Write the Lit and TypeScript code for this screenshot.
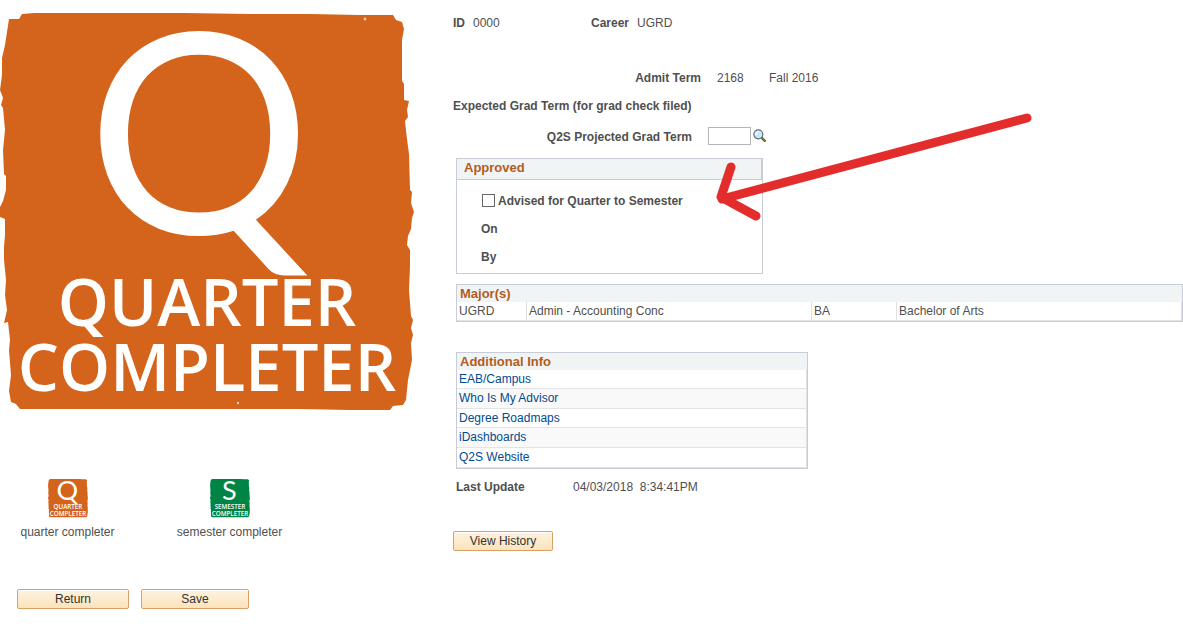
import { LitElement, html, css, svg } from "lit";
import { customElement, property } from "lit/decorators.js";

// Rough-edged stamp shared by the large badge and both thumbnails.
const STAMP =
  "M9 19 L19 19 L22 14 L34 13 L184 13 L250 14 L310 14 L360 15 L393 15 L396 20 L402 22 L404 29 L402 40 L402 81 L404 84 L404 100 L409 101 L407 110 L408 117 L405 121 L407 139 L409 154 L410 190 L412 192 L411 203 L414 212 L412 218 L411 229 L408 236 L407 245 L410 250 L410 267 L409 290 L411 316 L413 320 L411 328 L413 335 L411 343 L412 360 L408 380 L406 400 L403 405 L393 406 L390 410 L350 410 L300 409 L86 409 L20 409 L16 404 L11 402 L9 391 L11 375 L9 350 L10 340 L8 322 L4 323 L7 310 L5 295 L6 280 L4 260 L4 247 L5 235 L5 219 L0 217 L0 207 L3 201 L6 190 L6 176 L4 174 L3 150 L5 130 L3 108 L1 105 L3 98 L0 90 L2 75 L2 58 L5 45 Z";

@customElement("completer-badge")
export class CompleterBadge extends LitElement {
  @property() letter = "Q";
  @property() word = "QUARTER";
  @property() tone = "quarter";

  static styles = css`
    :host {
      display: block;
    }
    .art {
      display: block;
      width: 100%;
      height: auto;
      overflow: visible;
    }
    .quarter {
      fill: #d4641c;
    }
    .semester {
      fill: #008445;
    }
    .letter,
    .word {
      fill: #fff;
      text-anchor: middle;
    }
    .letter {
      font-family: Lato, "Open Sans", sans-serif;
      font-size: 280px;
      font-weight: 400;
    }
    .word {
      font-family: "Open Sans", "Noto Sans", sans-serif;
      font-size: 65px;
      font-weight: 600;
    }
    .speck {
      fill: #f3cdb4;
    }
  `;

  render() {
    return html`
      <svg class="art" viewBox="0 13 414 398" role="img" aria-label="${this.word} COMPLETER">
        ${svg`
          <path class=${this.tone} d=${STAMP}></path>
          <circle class="speck" cx="365" cy="19" r="1.4"></circle>
          <circle class="speck" cx="238" cy="403" r="1.2"></circle>
          <text class="letter" x="199" y="234">${this.letter}</text>
          <text class="word" x="207" y="326">${this.word}</text>
          <text class="word" x="207" y="391">COMPLETER</text>
        `}
      </svg>
    `;
  }
}

@customElement("app-root")
export class AppRoot extends LitElement {
  static styles = css`
    :host {
      display: block;
      position: relative;
      background: #fff;
      color: #4f4f4f;
      font-family: "Liberation Sans", Arial, sans-serif;
      font-size: 12px;
      line-height: 14px;
    }
    * {
      box-sizing: border-box;
    }
    .page {
      display: grid;
      grid-template-columns: 453px minmax(0, 1fr);
      align-items: start;
    }
    .side {
      padding-top: 13px;
    }
    .hero {
      width: 414px;
    }
    .choices {
      display: flex;
      gap: 55px;
      margin-top: 68px;
      padding-left: 14px;
    }
    .choice {
      display: flex;
      flex-direction: column;
      align-items: center;
      gap: 8px;
      width: 107px;
      margin: 0;
      white-space: nowrap;
    }
    .thumb {
      width: 40px;
    }
    .actions {
      display: flex;
      gap: 12px;
      margin-top: 50px;
      padding-left: 17px;
    }
    .button {
      height: 20px;
      padding: 0;
      border: 1px solid #d9a066;
      border-radius: 2px;
      background: linear-gradient(#fdf3e0, #fbe3bb);
      box-shadow: inset 0 1px 0 #fff;
      color: #333;
      font: inherit;
      line-height: 18px;
    }
    .return {
      width: 112px;
    }
    .save {
      width: 108px;
    }
    .history {
      width: 100px;
      margin-top: 37px;
    }
    .main {
      padding-top: 16px;
    }
    .line {
      display: flex;
      align-items: baseline;
    }
    .label {
      font-weight: 700;
    }
    .gap {
      margin-left: 8px;
    }
    .id {
      width: 138px;
    }
    .admit {
      margin-top: 41px;
      gap: 16px;
    }
    .admit-label {
      width: 248px;
      text-align: right;
    }
    .code {
      width: 36px;
    }
    .expected {
      margin-top: 14px;
    }
    .projected {
      align-items: center;
      margin-top: 14px;
    }
    .projected-label {
      width: 239px;
      margin-right: 16px;
      padding-top: 2px;
      text-align: right;
    }
    .term {
      width: 43px;
      height: 18px;
      padding: 0 2px;
      border: 1px solid #b5b5b5;
      border-radius: 0;
      font: inherit;
    }
    .lookup {
      width: 14px;
      height: 14px;
      margin-left: 2px;
      padding: 0;
      border: 0;
      background: none;
    }
    .glass {
      display: block;
    }
    .panel {
      margin-left: 3px;
      border: 1px solid #c8ccd6;
    }
    .title {
      margin: 0;
      padding: 0 3px;
      background: #f0f4f5;
      color: #b25d1d;
      font-size: 13px;
      font-weight: 700;
      line-height: 17px;
      text-align: left;
    }
    .approved {
      width: 307px;
      margin-top: 13px;
    }
    .approved-title {
      padding: 0 7px 3px;
      border-bottom: 1px solid #c8ccd6;
      border-right: 1px solid #c8ccd6;
    }
    .fields {
      display: flex;
      flex-direction: column;
      gap: 14px;
      padding: 14px 24px 9px;
    }
    .check {
      display: flex;
      align-items: flex-start;
      gap: 3px;
    }
    .box {
      appearance: none;
      width: 13px;
      height: 13px;
      margin: 0 0 0 1px;
      border: 1px solid #666;
      background: #fff;
    }
    .box:checked {
      background: #666;
    }
    .grid {
      border-spacing: 0;
      border-collapse: separate;
      table-layout: fixed;
    }
    .grid th {
      padding: 0 3px;
    }
    .grid td {
      height: 19px;
      padding: 0 2px 1px;
      border-right: 1px solid #dfe0e2;
      border-bottom: 1px solid #e2e4e6;
      vertical-align: middle;
    }
    .majors {
      width: calc(100% - 3px);
      margin-top: 10px;
    }
    .c-career {
      width: 70px;
    }
    .c-degree {
      width: 85px;
    }
    .info {
      width: 352px;
      margin-top: 30px;
    }
    .info tr:nth-child(even) td {
      height: 20px;
      background: #f9f9f9;
    }
    .info tbody tr:last-child td {
      height: 20px;
    }
    .link {
      color: #004b91;
      text-decoration: none;
    }
    .updated {
      margin-top: 11px;
      padding-left: 3px;
    }
    .updated-label {
      width: 117px;
    }
    .time {
      white-space: pre;
    }
    .arrow {
      position: absolute;
      left: 714px;
      top: 112px;
      pointer-events: none;
    }
  `;

  private links = [
    "EAB/Campus",
    "Who Is My Advisor",
    "Degree Roadmaps",
    "iDashboards",
    "Q2S Website",
  ];

  render() {
    return html`
      <div class="page">
        <div class="side">
          <completer-badge class="hero"></completer-badge>
          <div class="choices">
            <figure class="choice">
              <completer-badge class="thumb"></completer-badge>
              <figcaption>quarter completer</figcaption>
            </figure>
            <figure class="choice">
              <completer-badge class="thumb" letter="S" word="SEMESTER" tone="semester"></completer-badge>
              <figcaption>semester completer</figcaption>
            </figure>
          </div>
          <div class="actions">
            <button class="button return" type="button">Return</button>
            <button class="button save" type="button">Save</button>
          </div>
        </div>

        <main class="main">
          <div class="line">
            <div class="id"><span class="label">ID</span><span class="gap">0000</span></div>
            <div><span class="label">Career</span><span class="gap">UGRD</span></div>
          </div>
          <div class="line admit">
            <span class="label admit-label">Admit Term</span>
            <span class="code">2168</span>
            <span>Fall 2016</span>
          </div>
          <div class="label expected">Expected Grad Term (for grad check filed)</div>
          <div class="line projected">
            <label class="label projected-label" for="term">Q2S Projected Grad Term</label>
            <input class="term" id="term" type="text" />
            <button class="lookup" type="button" aria-label="Look up term">
              <svg class="glass" width="14" height="14" viewBox="0 0 14 14">
                <path d="M8.5 8.5 L12.5 12.5" stroke="#4c4a1c" stroke-width="2.4" />
                <path d="M8.8 8.4 L12.3 11.9" stroke="#b5a642" stroke-width="1" />
                <circle cx="5.3" cy="5.3" r="4.5" fill="#c9e6fb" stroke="#66707c" stroke-width="1.2" />
                <path d="M2.8 5.5 A2.7 2.7 0 0 1 5.5 2.8" fill="none" stroke="#fff" stroke-width="1.6" />
              </svg>
            </button>
          </div>

          <section class="panel approved">
            <h2 class="title approved-title">Approved</h2>
            <div class="fields">
              <label class="label check">
                <input class="box" type="checkbox" />Advised for Quarter to Semester
              </label>
              <div class="label">On</div>
              <div class="label">By</div>
            </div>
          </section>

          <table class="panel grid majors">
            <colgroup>
              <col class="c-career" />
              <col />
              <col class="c-degree" />
              <col />
            </colgroup>
            <thead>
              <tr><th class="title" colspan="4">Major(s)</th></tr>
            </thead>
            <tbody>
              <tr>
                <td>UGRD</td>
                <td>Admin - Accounting Conc</td>
                <td>BA</td>
                <td>Bachelor of Arts</td>
              </tr>
            </tbody>
          </table>

          <table class="panel grid info">
            <thead>
              <tr><th class="title">Additional Info</th></tr>
            </thead>
            <tbody>
              ${this.links.map(
                (name) => html`<tr><td><a class="link" href="#">${name}</a></td></tr>`
              )}
            </tbody>
          </table>

          <div class="line updated">
            <span class="label updated-label">Last Update</span>
            <span class="time">04/03/2018  8:34:41PM</span>
          </div>
          <button class="button history" type="button">View History</button>
        </main>
      </div>

      <svg class="arrow" width="320" height="112" viewBox="714 112 320 112" aria-hidden="true">
        <path
          d="M1027 118 L722 199 M731 167 L721 197 L756 216"
          fill="none"
          stroke="#e32d2d"
          stroke-width="9"
          stroke-linecap="round"
          stroke-linejoin="round"
        />
      </svg>
    `;
  }
}
